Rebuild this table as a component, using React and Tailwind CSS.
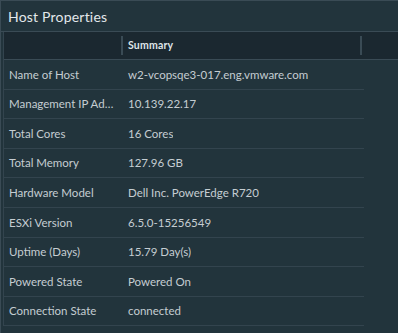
const rows = [
  ["Name of Host", "w2-vcopsqe3-017.eng.vmware.com"],
  ["Management IP Address", "10.139.22.17"],
  ["Total Cores", "16 Cores"],
  ["Total Memory", "127.96 GB"],
  ["Hardware Model", "Dell Inc. PowerEdge R720"],
  ["ESXi Version", "6.5.0-15256549"],
  ["Uptime (Days)", "15.79 Day(s)"],
  ["Powered State", "Powered On"],
  ["Connection State", "connected"],
];

export default function App() {
  return (
    <div
      className="w-[398px] h-[333px] overflow-hidden bg-[#22343c] border-t border-l border-[#3a4b55]"
      style={{ fontFamily: "Lato, 'Open Sans', sans-serif" }}
    >
      {/* Title */}
      <div className="h-[31px] flex items-center pl-[7px] border-b border-[#3a4b55]">
        <h2 className="text-[14px] tracking-[0.2px] text-[#e3e8eb]">Host Properties</h2>
      </div>
      {/* Grid */}
      <div className="ml-[2px] border-l border-[#33444e]">
        {/* Header */}
        <div className="h-[28px] flex items-center bg-[#1b2830] border-b border-[#3a4b55]">
          <div className="w-[119px] h-[19px] border-r-2 border-[#3a4b55]" />
          <div className="w-[239px] pl-[5px] h-[19px] flex items-center text-[10.5px] font-bold tracking-[0.2px] text-[#dfe5e8] border-r-2 border-[#3a4b55]">
            Summary
          </div>
        </div>
        {/* Rows */}
        {rows.map(([label, value]) => (
          <div
            key={label}
            className="w-[360px] h-[29.6px] flex items-center border-b border-[#33444e] text-[11.5px] text-[#c5cdd2]"
          >
            <div className="w-[120px] pl-[5px] pr-[6px] truncate">{label}</div>
            <div className="pl-[4px] truncate">{value}</div>
          </div>
        ))}
      </div>
    </div>
  );
}
